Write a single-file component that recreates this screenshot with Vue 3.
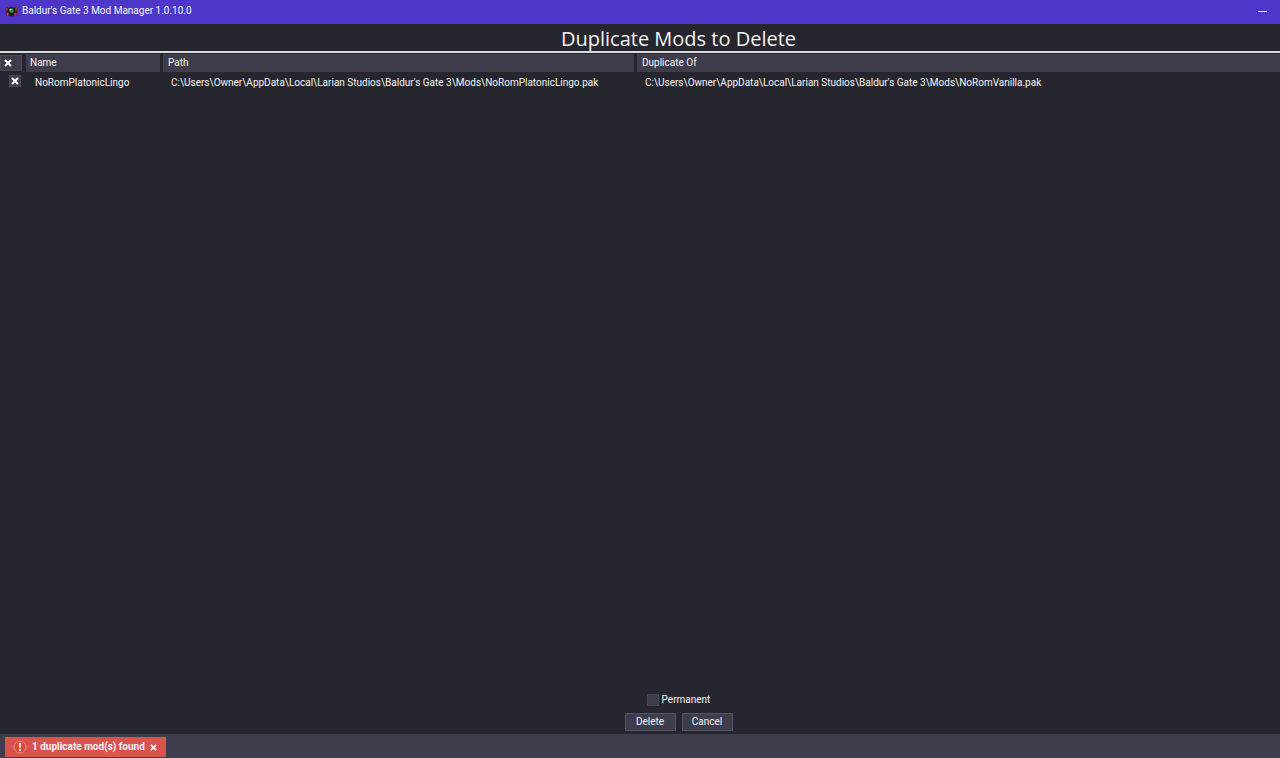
<script setup>
import { computed, ref } from 'vue'

const mods = ref([
  {
    selected: true,
    name: 'NoRomPlatonicLingo',
    path: "C:\\Users\\Owner\\AppData\\Local\\Larian Studios\\Baldur's Gate 3\\Mods\\NoRomPlatonicLingo.pak",
    original: "C:\\Users\\Owner\\AppData\\Local\\Larian Studios\\Baldur's Gate 3\\Mods\\NoRomVanilla.pak",
  },
])
const permanent = ref(false)
const alertVisible = ref(true)

const allSelected = computed({
  get: () => mods.value.every((mod) => mod.selected),
  set: (value) => mods.value.forEach((mod) => (mod.selected = value)),
})
</script>

<template>
  <div class="window">
    <header class="titlebar">
      <svg class="logo" viewBox="0 0 14 14" aria-hidden="true">
        <path d="M1 2l3 1 3-1 3 1 3-1 .5 4-1 3-.5 4-2-3-1 2H5l-1-2-2 3-.5-4L.5 6z" fill="#4a1613" />
        <path d="M1 2l2 2-1 3zM13 2l-2 2 1 3zM2 8l2 1-2 4zM12 8l-2 1 2 4z" fill="#b8552c" />
        <path d="M4 3h6l1 3-2 4-2 2-2-2-2-4z" fill="#151d18" />
        <circle cx="7" cy="6" r="2.500" fill="#347f49" />
        <circle cx="6" cy="5" r="1" fill="#d5efd5" />
      </svg>
      <span class="app-name">Baldur's Gate 3 Mod Manager 1.0.10.0</span>
      <button class="minimize" type="button" aria-label="Minimize"><span></span></button>
    </header>

    <main class="content">
      <h1>Duplicate Mods to Delete</h1>
      <table>
        <colgroup>
          <col class="col-check" />
          <col class="col-name" />
          <col class="col-path" />
          <col />
        </colgroup>
        <thead>
          <tr>
            <th class="check-head">
              <label class="check all">
                <input v-model="allSelected" type="checkbox" aria-label="Select all" />
                <svg v-if="allSelected" viewBox="0 0 8 8" aria-hidden="true"><path d="M1 1l6 6M7 1L1 7" /></svg>
              </label>
            </th>
            <th>Name</th>
            <th>Path</th>
            <th>Duplicate Of</th>
          </tr>
        </thead>
        <tbody>
          <tr v-for="mod in mods" :key="mod.name">
            <td class="check-cell">
              <label class="check">
                <input v-model="mod.selected" type="checkbox" :aria-label="mod.name" />
                <svg v-if="mod.selected" viewBox="0 0 8 8" aria-hidden="true"><path d="M1 1l6 6M7 1L1 7" /></svg>
              </label>
            </td>
            <td class="name">{{ mod.name }}</td>
            <td>{{ mod.path }}</td>
            <td>{{ mod.original }}</td>
          </tr>
        </tbody>
      </table>

      <div class="controls">
        <div class="permanent">
          <span class="check">
            <input id="permanent" v-model="permanent" type="checkbox" />
            <svg v-if="permanent" viewBox="0 0 8 8" aria-hidden="true"><path d="M1 1l6 6M7 1L1 7" /></svg>
          </span>
          <label for="permanent">Permanent</label>
        </div>
        <div class="buttons">
          <button type="button">Delete</button>
          <button type="button">Cancel</button>
        </div>
      </div>
    </main>

    <footer class="statusbar">
      <div v-if="alertVisible" class="alert" role="alert">
        <svg class="warning" viewBox="0 0 14 14" aria-hidden="true">
          <circle cx="7" cy="7" r="6" fill="#dd4b3c" stroke="#f08f7c" />
          <path d="M6 3h2l-.4 5H6.400zM6 9h2v2H6z" fill="#fff" />
        </svg>
        <span>1 duplicate mod(s) found</span>
        <button class="dismiss" type="button" aria-label="Dismiss" @click="alertVisible = false">
          <svg viewBox="0 0 8 8" aria-hidden="true"><path d="M1 1l6 6M7 1L1 7" /></svg>
        </button>
      </div>
    </footer>
  </div>
</template>

<style>
body {
  margin: 0;
  background: #26262f;
}
</style>

<style scoped>
.window {
  --panel: #3f3d4b;
  --edge: #4a4859;
  --dark: #26262f;
  display: flex;
  flex-direction: column;
  min-height: 100vh;
  background: var(--dark);
  color: #f4f4f4;
  font-family: Roboto, "Open Sans", sans-serif;
  font-size: 10px;
  line-height: 16px;
}
.window *,
.window *::before {
  box-sizing: border-box;
}
button,
input {
  margin: 0;
  padding: 0;
  border: 0;
  color: inherit;
  font: inherit;
}
.titlebar {
  display: flex;
  align-items: center;
  height: 24px;
  padding: 0 10px 2px 5px;
  background: #4e37c8;
}
.logo {
  width: 13px;
  height: 13px;
  margin-right: 4px;
}
.app-name {
  flex: 1;
}
.minimize {
  display: grid;
  place-items: center;
  width: 16px;
  height: 16px;
  background: none;
}
.minimize span {
  width: 9px;
  height: 1px;
  background: #e6e1fa;
}
.content {
  flex: 1;
  display: flex;
  flex-direction: column;
}
h1 {
  margin: 0;
  padding: 2px 0 0 77px;
  border-bottom: 2px solid #d9dbd8;
  font-family: "Open Sans", sans-serif;
  font-size: 20px;
  font-weight: 400;
  line-height: 25px;
  text-align: center;
}
table {
  width: 100%;
  margin-top: 1px;
  border-collapse: separate;
  border-spacing: 0;
  table-layout: fixed;
}
.col-check {
  width: 26px;
}
.col-name {
  width: 137px;
}
.col-path {
  width: 474px;
}
th {
  height: 18px;
  padding: 0 0 0 4px;
  border-right: 3px solid var(--dark);
  background: var(--panel);
  font-weight: 400;
  text-align: left;
}
th:nth-child(n + 3) {
  padding-left: 5px;
}
th:last-child {
  border-right: 0;
}
th.check-head {
  padding: 0;
  background: none;
}
td {
  height: 21px;
  padding: 0 0 0 8px;
  white-space: nowrap;
}
td.name {
  padding-left: 9px;
}
td.check-cell {
  padding: 0 0 3px 9px;
}
.check {
  display: grid;
  place-items: center;
  width: 12px;
  height: 12px;
}
.check.all {
  width: 22px;
  height: 16px;
}
.check input {
  grid-area: 1 / 1;
  width: 100%;
  height: 100%;
  appearance: none;
  border: 1px solid var(--edge);
  background: var(--panel);
}
.check svg {
  grid-area: 1 / 1;
  width: 8px;
  height: 8px;
  pointer-events: none;
}
.check.all svg {
  margin-right: 6px;
}
.check path,
.dismiss path {
  fill: none;
  stroke: #fff;
  stroke-width: 2;
}
.controls {
  display: flex;
  flex-direction: column;
  align-items: center;
  gap: 5px;
  margin-top: auto;
  padding: 0 0 3px 77px;
}
.permanent {
  display: flex;
  align-items: center;
  gap: 3px;
}
.buttons {
  display: flex;
  gap: 6px;
}
.buttons button {
  min-width: 51px;
  height: 18px;
  border: 1px solid #545169;
  background: var(--panel);
  line-height: 16px;
}
.statusbar {
  height: 24px;
  padding: 3px 5px 1px;
  background: var(--panel);
}
.alert {
  display: inline-flex;
  align-items: center;
  height: 20px;
  padding: 0 8px;
  background: #d9534f;
  font-weight: 700;
  vertical-align: top;
}
.warning {
  width: 14px;
  height: 14px;
  margin-right: 5px;
}
.dismiss {
  display: grid;
  place-items: center;
  width: 8px;
  height: 14px;
  margin-left: 5px;
  background: none;
}
.dismiss svg {
  width: 7px;
  height: 7px;
}
</style>
